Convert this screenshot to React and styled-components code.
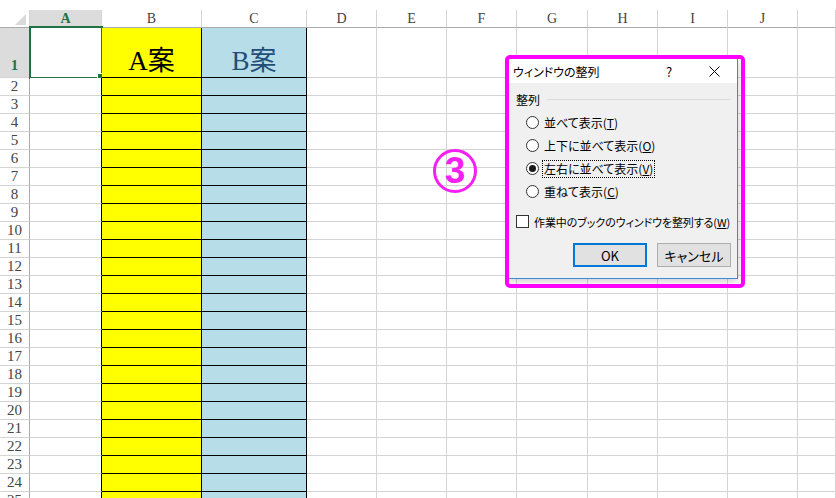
import React from 'react';
import styled, { createGlobalStyle } from 'styled-components';

const GlobalStyle = createGlobalStyle`
  html, body {
    margin: 0;
    padding: 0;
    background: #fff;
    overflow: hidden;
  }
  body {
    font-family: "Noto Sans CJK JP", "Noto Sans", sans-serif;
  }
`;

const LETTERS = ['A', 'B', 'C', 'D', 'E', 'F', 'G', 'H', 'I', 'J', ''];
const ROWS = Array.from({ length: 25 }, (_, i) => i + 1);

const Page = styled.div`
  position: relative;
  width: 836px;
  height: 498px;
  overflow: hidden;
`;

const Sheet = styled.div`
  padding-top: 10px;
  display: grid;
  grid-template-columns: 30px 72px 100px 105px 70px 70px 70px 71px 70px 70px 70px 1fr;
  grid-template-rows: 18px 50px repeat(24, 18px);
`;

const Corner = styled.div`
  box-sizing: border-box;
  border-right: 1px solid #d4d4d4;
  border-bottom: 1px solid #ababab;
  display: flex;
  align-items: flex-end;
  justify-content: flex-end;
  padding: 0 3px 2px 0;
`;

const ColHead = styled.div`
  box-sizing: border-box;
  border-right: 1px solid #d4d4d4;
  border-bottom: 1px solid #ababab;
  background: ${p => (p.$selected ? '#dcdcdc' : '#fff')};
  color: ${p => (p.$selected ? '#217346' : '#444')};
  font-weight: ${p => (p.$selected ? 700 : 400)};
  font-family: "Liberation Serif", "Times New Roman", serif;
  font-size: 14px;
  display: flex;
  align-items: center;
  justify-content: center;
  padding-top: 1px;
`;

const RowHead = styled.div`
  box-sizing: border-box;
  border-right: 1px solid #ababab;
  border-bottom: 1px solid #d4d4d4;
  background: ${p => (p.$selected ? '#dcdcdc' : '#fff')};
  color: ${p => (p.$selected ? '#217346' : '#444')};
  font-weight: ${p => (p.$selected ? 700 : 400)};
  font-family: "Liberation Serif", "Times New Roman", serif;
  font-size: 15px;
  line-height: 16px;
  display: flex;
  align-items: flex-end;
  justify-content: center;
  padding-bottom: ${p => (p.$selected ? '4px' : '1px')};
`;

const Cell = styled.div`
  box-sizing: border-box;
  position: relative;
  border-right: 1px solid ${p => p.$right || '#d4d4d4'};
  border-bottom: 1px solid ${p => p.$bottom || '#d4d4d4'};
  background: ${p => p.$bg || '#fff'};
  display: flex;
  align-items: flex-end;
  justify-content: center;
`;

const Title = styled.span`
  font-family: "Liberation Serif", "Noto Sans CJK JP", serif;
  font-size: 27px;
  line-height: 30px;
  color: ${p => p.$color};
  margin-bottom: 1px;
`;

const Selection = styled.div`
  position: absolute;
  left: -1px;
  top: -2px;
  width: 74px;
  height: 53px;
  box-sizing: border-box;
  border: 2px solid #217346;
`;

const FillHandle = styled.div`
  position: absolute;
  right: -4px;
  bottom: -4px;
  width: 6px;
  height: 6px;
  background: #217346;
  border: 1px solid #fff;
`;

const Marker = styled.div`
  position: absolute;
  left: 433px;
  top: 149px;
  width: 44px;
  height: 44px;
  box-sizing: border-box;
  border: 3px solid #f31ff3;
  border-radius: 50%;
  color: #f31ff3;
  font-family: "Liberation Sans", Arial, sans-serif;
  font-weight: 700;
  font-size: 37px;
  line-height: 38px;
  display: flex;
  align-items: center;
  justify-content: center;
`;

/* dialog */
const DialogHolder = styled.div`
  position: absolute;
  left: 505px;
  top: 55px;
  width: 240px;
  height: 233px;
  box-sizing: border-box;
  padding: 4px 0 0 4px;
`;

const Ring = styled.div`
  position: absolute;
  inset: 0;
  border: 4px solid #ff00ff;
  border-radius: 5px;
  pointer-events: none;
`;

const Window = styled.div`
  width: 229px;
  height: 220px;
  box-sizing: border-box;
  background: #f0f0f0;
  border-right: 1px solid #3c8ad4;
  border-bottom: 1px solid #3c8ad4;
  box-shadow: 0 2px 8px rgba(0, 0, 0, 0.22);
  display: flex;
  flex-direction: column;
  font-size: 12px;
  color: #000;
  font-feature-settings: "palt";
`;

const TitleBar = styled.div`
  height: 24px;
  background: #fff;
  display: flex;
  align-items: center;
  padding-left: 4px;
`;

const TitleText = styled.span`
  flex: 1;
`;

const TitleButton = styled.div`
  width: ${p => p.$w}px;
  height: 24px;
  display: flex;
  align-items: center;
  justify-content: center;
  font-size: 13px;
`;

const Body = styled.div`
  flex: 1;
  display: flex;
  flex-direction: column;
  padding: 8px 6px 0 7px;
`;

const GroupHeader = styled.div`
  display: flex;
  align-items: center;
  gap: 7px;
  height: 17px;
  line-height: 17px;
`;

const GroupLine = styled.div`
  flex: 1;
  height: 1px;
  background: #dcdcdc;
`;

const Options = styled.div`
  margin-top: 3px;
  padding-left: 10px;
  display: flex;
  flex-direction: column;
`;

const Option = styled.label`
  height: 23px;
  display: flex;
  align-items: center;
  gap: 4px;
`;

const Radio = styled.span`
  width: 13px;
  height: 13px;
  box-sizing: border-box;
  border: 1px solid #333;
  border-radius: 50%;
  background: #fff;
  display: flex;
  align-items: center;
  justify-content: center;
  &::after {
    content: '';
    width: 7px;
    height: 7px;
    border-radius: 50%;
    background: ${p => (p.$checked ? '#1a1a1a' : 'transparent')};
  }
`;

const OptionText = styled.span`
  padding: 0 1px;
  line-height: 16px;
  outline: ${p => (p.$focus ? '1px dotted #000' : 'none')};
`;

const CheckRow = styled.label`
  margin-top: 7px;
  height: 23px;
  display: flex;
  align-items: center;
  gap: 5px;
  white-space: nowrap;
`;

const CheckText = styled.span`
  font-size: 11px;
  letter-spacing: -0.1px;
`;

const Box = styled.span`
  flex: none;
  width: 13px;
  height: 13px;
  box-sizing: border-box;
  border: 1px solid #333;
  background: #fff;
`;

const Buttons = styled.div`
  margin-top: 10px;
  display: flex;
  justify-content: flex-end;
  gap: 10px;
`;

const Button = styled.div`
  width: 74px;
  height: 24px;
  box-sizing: border-box;
  background: #e1e1e1;
  border: ${p => (p.$default ? '2px solid #0078d7' : '1px solid #adadad')};
  display: flex;
  align-items: center;
  justify-content: center;
  font-size: 13px;
`;

const Key = ({ children }) => <u>{children}</u>;

function CornerMark() {
  return (
    <svg width="11" height="11" viewBox="0 0 11 11">
      <polygon points="11,0 11,11 0,11" fill="#dadada" />
    </svg>
  );
}

function CloseIcon() {
  return (
    <svg width="11" height="11" viewBox="0 0 11 11">
      <path d="M0.5 0.5 L10.5 10.5 M10.5 0.5 L0.5 10.5" stroke="#000" strokeWidth="1" fill="none" />
    </svg>
  );
}

function cellProps(col, row) {
  if (col === 'A') return { $right: row >= 1 ? '#000' : undefined };
  if (col === 'B') return { $bg: '#ffff00', $right: '#000', $bottom: '#000' };
  if (col === 'C') return { $bg: '#b7dde8', $right: '#000', $bottom: '#000' };
  return {};
}

export default function App() {
  return (
    <Page>
      <GlobalStyle />
      <Sheet>
        <Corner>
          <CornerMark />
        </Corner>
        {LETTERS.map((l, i) => (
          <ColHead key={i} $selected={l === 'A'}>{l}</ColHead>
        ))}
        {ROWS.map(r => (
          <React.Fragment key={r}>
            <RowHead $selected={r === 1}>{r}</RowHead>
            {LETTERS.map((l, i) => (
              <Cell key={i} {...cellProps(l, r)}>
                {r === 1 && l === 'A' && (
                  <Selection>
                    <FillHandle />
                  </Selection>
                )}
                {r === 1 && l === 'B' && <Title $color="#000">A案</Title>}
                {r === 1 && l === 'C' && <Title $color="#1f4e79">B案</Title>}
              </Cell>
            ))}
          </React.Fragment>
        ))}
      </Sheet>

      <Marker>3</Marker>

      <DialogHolder>
        <Window>
          <TitleBar>
            <TitleText>ウィンドウの整列</TitleText>
            <TitleButton $w={46}>?</TitleButton>
            <TitleButton $w={45}>
              <CloseIcon />
            </TitleButton>
          </TitleBar>
          <Body>
            <GroupHeader>
              <span>整列</span>
              <GroupLine />
            </GroupHeader>
            <Options>
              <Option>
                <Radio />
                <OptionText>並べて表示(<Key>T</Key>)</OptionText>
              </Option>
              <Option>
                <Radio />
                <OptionText>上下に並べて表示(<Key>O</Key>)</OptionText>
              </Option>
              <Option>
                <Radio $checked />
                <OptionText $focus>左右に並べて表示(<Key>V</Key>)</OptionText>
              </Option>
              <Option>
                <Radio />
                <OptionText>重ねて表示(<Key>C</Key>)</OptionText>
              </Option>
            </Options>
            <CheckRow>
              <Box />
              <CheckText>作業中のブックのウィンドウを整列する(<Key>W</Key>)</CheckText>
            </CheckRow>
            <Buttons>
              <Button $default>OK</Button>
              <Button>キャンセル</Button>
            </Buttons>
          </Body>
        </Window>
        <Ring />
      </DialogHolder>
    </Page>
  );
}
